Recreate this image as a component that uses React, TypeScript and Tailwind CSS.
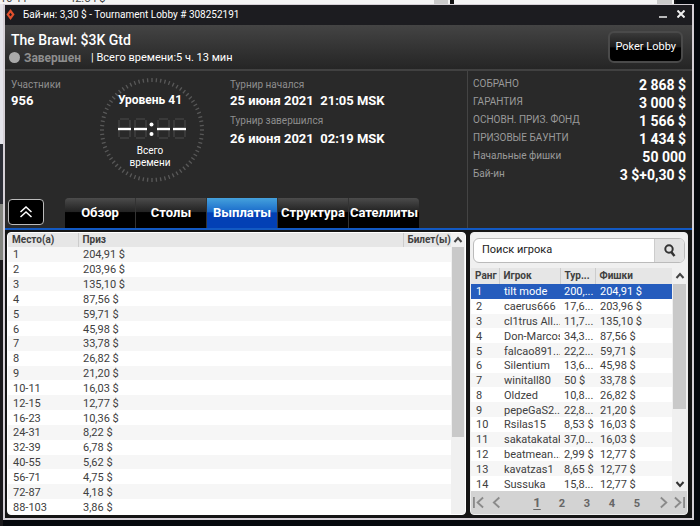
import { useState } from 'react'

const tabs = ['Обзор', 'Столы', 'Выплаты', 'Структура', 'Сателлиты']

const stats = [
  ['СОБРАНО', '2 868 $'],
  ['ГАРАНТИЯ', '3 000 $'],
  ['ОСНОВН. ПРИЗ. ФОНД', '1 566 $'],
  ['ПРИЗОВЫЕ БАУНТИ', '1 434 $'],
  ['Начальные фишки', '50 000'],
  ['Бай-ин', '3 $+0,30 $'],
]

const prizes = [
  ['1', '204,91 $'],
  ['2', '203,96 $'],
  ['3', '135,10 $'],
  ['4', '87,56 $'],
  ['5', '59,71 $'],
  ['6', '45,98 $'],
  ['7', '33,78 $'],
  ['8', '26,82 $'],
  ['9', '21,20 $'],
  ['10-11', '16,03 $'],
  ['12-15', '12,77 $'],
  ['16-23', '10,36 $'],
  ['24-31', '8,22 $'],
  ['32-39', '6,78 $'],
  ['40-55', '5,62 $'],
  ['56-71', '4,75 $'],
  ['72-87', '4,18 $'],
  ['88-103', '3,86 $'],
]

const players = [
  ['tilt mode', '200,...', '204,91 $'],
  ['caerus666', '17,6...', '203,96 $'],
  ['cl1trus All...', '11,7...', '135,10 $'],
  ['Don-Marcos', '34,3...', '87,56 $'],
  ['falcao891...', '22,2...', '59,71 $'],
  ['Silentium', '13,6...', '45,98 $'],
  ['winitall80', '50 $', '33,78 $'],
  ['Oldzed', '10,8...', '26,82 $'],
  ['pepeGaS2...', '22,8...', '21,20 $'],
  ['Rsilas15', '8,53 $', '16,03 $'],
  ['sakatakatak', '37,0...', '16,03 $'],
  ['beatmean...', '2,99 $', '12,77 $'],
  ['kavatzas1', '8,65 $', '12,77 $'],
  ['Sussuka', '15,8...', '12,77 $'],
]

function Chevron({ d, className }: { d: string; className: string }) {
  return (
    <svg viewBox="0 0 12 14" className={className} fill="none" stroke="currentColor" strokeWidth="2">
      <path d={d} />
    </svg>
  )
}

// one unlit seven-segment digit with its middle bar on
function Digit({ x }: { x: number }) {
  return (
    <g>
      <path
        d={`M${x + 2} 42h9M${x + 2} 61h9M${x + 1} 43v7M${x + 12} 43v7M${x + 1} 53v7M${x + 12} 53v7`}
        stroke="#3a3a3a"
        strokeWidth="2"
        fill="none"
      />
      <path d={`M${x} 52h13`} stroke="#fff" strokeWidth="2.4" />
    </g>
  )
}

function LevelClock() {
  return (
    <div className="grid size-[106px] shrink-0 text-center text-white">
      <svg viewBox="0 0 106 106" className="col-start-1 row-start-1 size-[106px]">
        {Array.from({ length: 72 }, (_, i) => (
          <path key={i} d="M53 1v4" stroke="#595959" strokeWidth="1.3" transform={`rotate(${i * 5} 53 53)`} />
        ))}
        <Digit x={19} />
        <Digit x={35} />
        <circle cx="52.5" cy="47.5" r="2" fill="#fff" />
        <circle cx="52.5" cy="57" r="2" fill="#fff" />
        <Digit x={58} />
        <Digit x={74} />
      </svg>
      <div className="col-start-1 row-start-1 flex flex-col justify-between pt-4 pr-1 pb-[14px]">
        <div className="text-xs leading-[14px] font-bold">Уровень 41</div>
        <div className="text-[10px] leading-3">
          Всего
          <br />
          времени
        </div>
      </div>
    </div>
  )
}

function App() {
  const [tab, setTab] = useState('Выплаты')
  const [selected, setSelected] = useState(0)
  const [page, setPage] = useState(1)

  return (
    <div className="flex h-screen flex-col overflow-hidden bg-[#05080d] font-[Roboto,sans-serif] text-[11px]">
      <div className="mr-6 flex h-1 shrink-0 items-end overflow-hidden bg-[#f4f4f4] text-[#444]">
        <span className="w-[69px] leading-[10px]">10-11</span>
        <span className="flex-1 leading-[10px]">42.54 $</span>
        <span className="mr-0.5 h-1 w-[14px] bg-[#cacaca]" />
        <span className="h-1 w-1 bg-[#111]" />
        <span className="ml-[203px] h-1 w-[15px] bg-[#cacaca]" />
        <span className="ml-0.5 h-1 w-0.5 bg-[#111]" />
      </div>

      <div className="flex min-h-0 flex-1">
        <div className="flex w-[3px] shrink-0 flex-col">
          <div className="h-[140px] bg-[#e4e4ea]" />
          <div className="h-[60px] bg-[#2b2d35]" />
          <div className="h-14 bg-[#83857f]" />
          <div className="flex-1 bg-[#1b1a1d]" />
        </div>

        <main className="mr-1.5 mb-1.5 flex min-w-0 flex-1 flex-col border-2 border-t-1 border-[#d5d0d6] bg-[#111]">
          <header className="flex h-5 shrink-0 items-center bg-[#1c1c20] pb-0.5 pl-px text-white">
            <svg viewBox="0 0 10 12" className="mr-[7px] h-[11px] w-[9px]">
              <path d="M5 0L9.500 6L5 12L.5 6z" fill="#e2502d" />
              <path d="M5 4L6.600 6.300L5 8L3.400 6.300z" fill="#1c1c20" />
            </svg>
            <h1 className="flex-1 pl-px text-[10px]">Бай-ин: 3,30 $ - Tournament Lobby # 308252191</h1>
            <button aria-label="Minimize" className="mr-2.5">
              <svg viewBox="0 0 8 8" className="size-2" stroke="#eee" strokeWidth="1.500">
                <path d="M0 7h8" />
              </svg>
            </button>
            <button aria-label="Close" className="mr-[7px]">
              <svg viewBox="0 0 8 8" className="size-2" stroke="#eee" strokeWidth="2">
                <path d="M.5 .5l7 7M7.500 .5l-7 7" />
              </svg>
            </button>
          </header>

          <section className="flex h-11 shrink-0 items-center justify-between bg-linear-to-b from-[#444] to-[#252525] pr-[9px] pl-1.5">
            <div className="pt-[3px]">
              <h2 className="text-sm leading-[18px] font-medium text-white">The Brawl: $3K Gtd</h2>
              <div className="flex items-center leading-[18px] text-white">
                <span className="mr-1 -ml-0.5 size-[11px] rounded-full bg-[#a9a9a9]" />
                <span className="mr-2.5 text-xs leading-[18px] font-bold text-[#8e8e8e]">Завершен</span>
                <span>| Всего времени:5 ч. 13 мин</span>
              </div>
            </div>
            <button className="h-8 rounded-md border-2 border-[#4a4a4a] bg-linear-to-b from-[#3a3a3a] from-0% via-[#1c1c1c] via-50% to-black to-55% px-[5px] whitespace-nowrap text-white">
              Poker Lobby
            </button>
          </section>

          <div className="flex min-h-0 flex-1 flex-col border-t-2 border-[#414141]">
            <section className="flex shrink-0 border-b-2 border-[#1259c3] bg-[#292929]">
              <div className="flex flex-1 flex-col justify-between">
                <div className="flex pt-1.5 pl-1.5">
                  <dl className="w-[88px]">
                    <dt className="text-[10px] leading-4 text-[#8e8e8e]">Участники</dt>
                    <dd className="text-[13px] leading-4 font-bold text-white">956</dd>
                  </dl>
                  <LevelClock />
                  <dl className="ml-[25px]">
                    <dt className="text-[10px] leading-4 text-[#8e8e8e]">Турнир начался</dt>
                    <dd className="mb-1 text-[13px] leading-4 font-bold whitespace-pre text-white">25 июня 2021  21:05 MSK</dd>
                    <dt className="text-[10px] leading-4 text-[#8e8e8e]">Турнир завершился</dt>
                    <dd className="mt-0.5 text-[13px] leading-4 font-bold whitespace-pre text-white">26 июня 2021  02:19 MSK</dd>
                  </dl>
                </div>
                <div className="flex items-end pl-[3px]">
                  <button
                    aria-label="Свернуть"
                    className="mr-[21px] mb-[3px] flex h-[26px] w-9 items-center justify-center rounded border border-[#bbb] bg-black text-white"
                  >
                    <svg viewBox="0 0 12 12" className="size-3" fill="none" stroke="currentColor" strokeWidth="1.500">
                      <path d="M.5 6L6 1l5.500 5M.5 11L6 6l5.500 5" />
                    </svg>
                  </button>
                  <nav className="flex gap-px overflow-hidden rounded-t bg-[#333]">
                    {tabs.map((t) => (
                      <button
                        key={t}
                        onClick={() => setTab(t)}
                        className={`h-[30px] w-[70px] text-[13px] font-bold whitespace-nowrap text-white ${
                          t === tab
                            ? 'bg-linear-to-b from-[#45a1dc] from-0% via-[#1c6ccb] via-45% to-[#0340b5] to-50%'
                            : 'bg-linear-to-b from-[#4c4c4c] from-0% via-[#232323] via-45% to-black to-50%'
                        }`}
                      >
                        {t}
                      </button>
                    ))}
                  </nav>
                </div>
              </div>
              <dl className="flex w-[225px] flex-col border-l border-[#444] pt-[5px] pr-1.5 pb-11 pl-[5px]">
                {stats.map(([label, value]) => (
                  <div key={label} className="flex h-[18px] justify-between text-white">
                    <dt className="text-[10px] leading-4 text-[#9a9a9a]">{label}</dt>
                    <dd className="text-sm leading-[19px] font-bold">{value}</dd>
                  </div>
                ))}
              </dl>
            </section>

            <div className="flex min-h-0 flex-1 gap-1 bg-[#151515] pt-0.5 pr-1 pb-[3px] pl-0.5 text-[#404040]">
              <section className="flex min-w-0 flex-1 overflow-hidden rounded border border-white bg-white">
                <div className="min-w-0 flex-1">
                  <table className="h-full w-full table-fixed border-collapse text-left leading-3">
                    <thead>
                      <tr className="h-[14px] bg-[#e6e6e6] text-[10px]">
                        <th className="w-[70px] p-0 pl-1 font-bold">Место(а)</th>
                        <th className="border-l border-[#ccc] p-0 pl-1 font-bold">Приз</th>
                        <th className="w-12 border-l border-[#ccc] p-0 pl-1 font-bold">Билет(ы)</th>
                      </tr>
                    </thead>
                    <tbody>
                      {prizes.map(([place, prize]) => (
                        <tr key={place} className="odd:bg-[#f6f6f6]">
                          <td className="p-0 pt-0.5 pl-[5px]">{place}</td>
                          <td className="p-0 pt-0.5 pl-[5px]">{prize}</td>
                          <td className="p-0" />
                        </tr>
                      ))}
                    </tbody>
                  </table>
                </div>
                <div className="flex w-[14px] shrink-0 flex-col items-center bg-[#f0f0f0]">
                  <Chevron d="M2.500 9L6 5l3.500 4" className="h-[14px] w-3 text-[#444]" />
                  <div className="h-[190px] w-3 bg-[#c9c9c9]" />
                </div>
              </section>

              <section className="flex w-[218px] shrink-0 flex-col overflow-hidden rounded border border-[#eee] bg-[#f0f0f0]">
                <form className="mx-0.5 mt-[5px] mb-[5px] flex h-[25px] shrink-0 overflow-hidden rounded-md border border-[#bbb] bg-white">
                  <input
                    aria-label="Поиск игрока"
                    placeholder="Поиск игрока"
                    className="min-w-0 flex-1 px-2 text-[11px] outline-none placeholder:text-[#222]"
                  />
                  <button
                    type="button"
                    aria-label="Найти"
                    className="flex w-[30px] items-center justify-center border-l border-[#ccc] bg-[#e2e2e2]"
                  >
                    <svg viewBox="0 0 12 13" className="h-[13px] w-3" fill="none" stroke="#333" strokeWidth="2">
                      <circle cx="5" cy="5" r="3.700" />
                      <path d="M7.300 8L10.500 12" strokeWidth="2.500" />
                    </svg>
                  </button>
                </form>
                <div className="flex min-h-0 flex-1">
                  <div className="min-w-0 flex-1">
                    <table className="h-full w-full table-fixed border-collapse text-left leading-3">
                      <thead>
                        <tr className="h-4 bg-[#e6e6e6] text-[10px]">
                          <th className="w-[28px] p-0 pl-1 font-bold">Ранг</th>
                          <th className="w-[61px] border-l border-[#ccc] p-0 pl-1 font-bold">Игрок</th>
                          <th className="w-[35px] border-l border-[#ccc] p-0 pl-1 font-bold">Тур...</th>
                          <th className="border-l border-[#ccc] p-0 pl-1 font-bold">Фишки</th>
                        </tr>
                      </thead>
                      <tbody>
                        {players.map(([name, bounty, chips], i) => (
                          <tr
                            key={name}
                            onClick={() => setSelected(i)}
                            className={i === selected ? 'bg-[#255cbd] text-white' : 'bg-white odd:bg-[#f6f6f6]'}
                          >
                            <td className="p-0 pt-0.5 pl-[5px]">{i + 1}</td>
                            <td className="overflow-hidden p-0 pt-0.5 pl-[5px] whitespace-nowrap">{name}</td>
                            <td className="p-0 pt-0.5 pl-1 whitespace-nowrap">{bounty}</td>
                            <td className="p-0 pt-0.5 pl-[5px]">{chips}</td>
                          </tr>
                        ))}
                      </tbody>
                    </table>
                  </div>
                  <div className="flex w-[15px] shrink-0 flex-col items-center">
                    <Chevron d="M2.500 9L6 5l3.500 4" className="h-4 w-3 text-[#444]" />
                    <div className="h-[125px] w-[13px] bg-[#c9c9c9]" />
                    <Chevron d="M2.500 5L6 9l3.500-4" className="mt-auto h-[14px] w-3 text-[#333]" />
                  </div>
                </div>
                <nav className="flex h-[23px] shrink-0 items-center justify-between bg-[#d3d3d3] px-0.5 font-bold text-[#666]">
                  <div className="flex gap-2 text-[#8a8a8a]">
                    <button aria-label="Первая">
                      <Chevron d="M1 1v12M11 1.500L5 7l6 5.500" className="h-[13px] w-[11px]" />
                    </button>
                    <button aria-label="Назад">
                      <Chevron d="M8 1.500L2 7l6 5.500" className="h-[13px] w-[11px]" />
                    </button>
                  </div>
                  <div className="ml-3 flex items-baseline gap-[17px]">
                    {[1, 2, 3, 4, 5].map((n) => (
                      <button
                        key={n}
                        onClick={() => setPage(n)}
                        className={n === page ? 'w-2 text-[13px] underline underline-offset-2' : 'w-2'}
                      >
                        {n}
                      </button>
                    ))}
                  </div>
                  <div className="flex gap-1 text-[#8a8a8a]">
                    <button aria-label="Вперёд">
                      <Chevron d="M2 1.500L8 7l-6 5.500" className="h-[13px] w-[11px]" />
                    </button>
                    <button aria-label="Последняя">
                      <Chevron d="M1 1.500L7 7l-6 5.500M11 1v12" className="h-[13px] w-[11px]" />
                    </button>
                  </div>
                </nav>
              </section>
            </div>
          </div>
        </main>
      </div>
    </div>
  )
}

export default App
